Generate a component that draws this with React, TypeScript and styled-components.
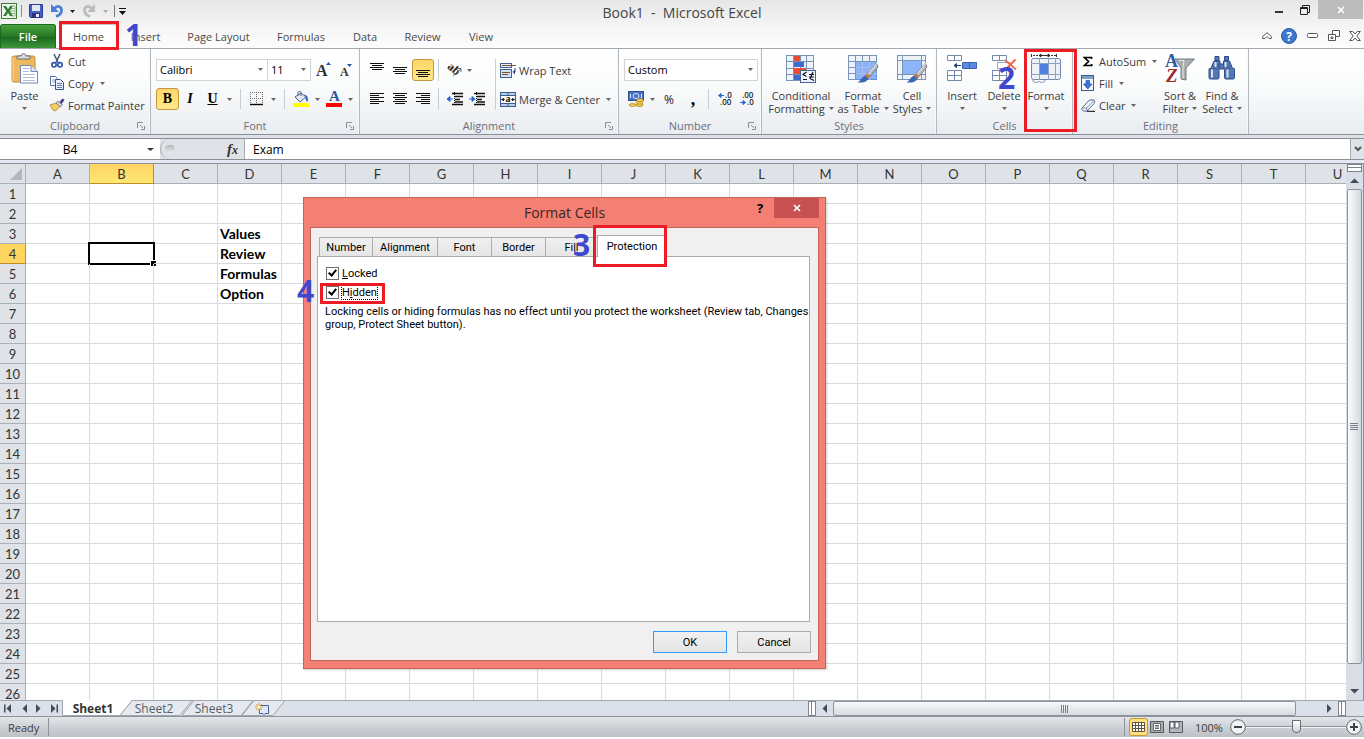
import React, { useEffect, useState } from "react";
import styled, { createGlobalStyle, css } from "styled-components";

const ui = `"Open Sans", "Noto Sans", sans-serif`;
const sheetFont = `Lato, "Open Sans", sans-serif`;
const dialogFont = `Roboto, "Liberation Sans", sans-serif`;

const Global = createGlobalStyle`
  *, *::before, *::after { box-sizing: border-box; }
  body { margin: 0; background: #fff; overflow: hidden; font-family: ${ui}; font-size: 11px; color: #3b3b3b; }
  button, input, select { font: inherit; color: inherit; margin: 0; }
  button { border: 0; padding: 0; background: none; cursor: default; }
  svg { display: block; flex: none; overflow: visible; }
  h1, h2, h3, p { margin: 0; font-weight: 400; }
`;

/* ---------- frame ---------- */

const Window = styled.div`
  position: relative;
  display: flex;
  flex-direction: column;
  height: 100vh;
  padding-bottom: 2px;
`;

const Top = styled.header`
  background: linear-gradient(#e6e6e6, #f4f4f4 50%, #fdfdfd);
`;

const TitleBar = styled.div`
  display: grid;
  grid-template-columns: 1fr auto 1fr;
  height: 24px;
`;

const QuickAccess = styled.div`
  display: flex;
  align-items: center;
  height: 22px;
  padding-left: 1px;
`;

const QuickButton = styled.button<{ $w: number }>`
  display: flex;
  justify-content: center;
  align-items: center;
  width: ${(p) => p.$w}px;
  height: 20px;
`;

const Rule = styled.span<{ $w: number; $h: number; $color?: string }>`
  display: flex;
  flex: none;
  justify-content: center;
  width: ${(p) => p.$w}px;
  height: ${(p) => p.$h}px;
  &::before {
    content: "";
    width: 1px;
    background: ${(p) => p.$color || "#c9ccd3"};
  }
`;

const AppTitle = styled.h1`
  font-size: 14px;
  line-height: 26px;
  color: #444;
  white-space: pre;
`;

const Caption = styled.div`
  display: flex;
  justify-content: flex-end;
  align-items: flex-start;
  padding-right: 1px;
`;

const CaptionButton = styled.button<{ $close?: boolean }>`
  display: flex;
  justify-content: center;
  align-items: center;
  width: ${(p) => (p.$close ? 45 : 26)}px;
  height: 19px;
  background: ${(p) => (p.$close ? "#bcbcbc" : "transparent")};
`;

const TabBar = styled.nav`
  display: flex;
  align-items: flex-end;
  height: 25px;
  border-bottom: 1px solid #a3aab2;
`;

const FileTab = styled.button`
  width: 56px;
  height: 24px;
  border: 1px solid #1f6a22;
  border-bottom: 0;
  border-radius: 3px 3px 0 0;
  background: linear-gradient(#48a03e, #2a7d28 45%, #1e6b20 55%, #3c963a);
  color: #fff;
  font-weight: 600;
`;

const RibbonTab = styled.button<{ $w: number; $active?: boolean }>`
  width: ${(p) => p.$w}px;
  height: 23px;
  color: #4a4a4a;
  ${(p) =>
    p.$active &&
    css`
      margin: 0 0 -1px 4px;
      height: 25px;
      padding-bottom: 2px;
      border: 1px solid #c0c4c9;
      border-bottom: 0;
      border-radius: 3px 3px 0 0;
      background: #fff;
    `}
`;

const TabTools = styled.div`
  display: flex;
  align-items: center;
  height: 25px;
  margin-left: auto;
`;

/* ---------- ribbon ---------- */

const Ribbon = styled.section`
  display: flex;
  height: 86px;
  border-bottom: 1px solid #8b9097;
  background: linear-gradient(#fff, #fbfcfc 40%, #e9ecf0);
`;

const Group = styled.section<{ $w: number }>`
  display: flex;
  flex: none;
  flex-direction: column;
  width: ${(p) => p.$w}px;
  border-right: 1px solid #b4b9c0;
  box-shadow: inset -1px 0 #f8f9fa;
`;

const GroupBody = styled.div<{ $pad: number }>`
  display: flex;
  flex: 1;
  padding: 1px 0 0 ${(p) => p.$pad}px;
`;

const GroupFoot = styled.div`
  display: grid;
  grid-template-columns: 18px 1fr 18px;
  align-items: center;
  height: 17px;
  text-align: center;
  color: #6b6f78;
`;

const LaunchButton = styled.button`
  display: flex;
  justify-content: center;
  align-items: center;
  height: 16px;
`;

const GroupName = styled.h2`
  font-size: 11px;
  line-height: 16px;
`;

const BigButton = styled.button<{ $w: number }>`
  display: flex;
  flex: none;
  flex-direction: column;
  align-items: center;
  width: ${(p) => p.$w}px;
  padding-top: 4px;
  line-height: 13px;
  white-space: nowrap;
`;

const BigIcon = styled.span`
  display: flex;
  justify-content: center;
  align-items: flex-start;
  height: 35px;
`;

const BigLine = styled.span`
  display: flex;
  align-items: center;
  gap: 4px;
  height: 13px;
`;

const Stack = styled.div<{ $w?: number }>`
  display: flex;
  flex: none;
  flex-direction: column;
  width: ${(p) => (p.$w ? p.$w + "px" : "auto")};
`;

const SmallButton = styled.button`
  display: flex;
  align-items: center;
  gap: 3px;
  height: 22px;
  white-space: nowrap;
`;

const IconSlot = styled.span`
  display: flex;
  justify-content: center;
  width: 16px;
`;

const Rows = styled.div<{ $w?: number }>`
  display: flex;
  flex: none;
  flex-direction: column;
  gap: 7px;
  width: ${(p) => (p.$w ? p.$w + "px" : "auto")};
  padding-top: 9px;
`;

const ToolRow = styled.div`
  display: flex;
  align-items: center;
  height: 22px;
`;

const Tool = styled.button<{ $w: number; $on?: boolean }>`
  display: flex;
  flex: none;
  justify-content: center;
  align-items: center;
  width: ${(p) => p.$w}px;
  height: 22px;
  font-size: 12px;
  color: #222;
  ${(p) =>
    p.$on &&
    css`
      border: 1px solid #c29a3d;
      border-radius: 3px;
      background: linear-gradient(#fcd56a, #ffe27a 60%, #ffe88c);
    `}
`;

const Glyph = styled.b<{ $look: "bold" | "italic" | "underline" | "comma" }>`
  font-family: "Liberation Serif", serif;
  font-size: ${(p) => (p.$look === "comma" ? 18 : 14)}px;
  line-height: 14px;
  color: #000;
  ${(p) => p.$look === "italic" && "font-style: italic;"}
  ${(p) => p.$look === "underline" && "text-decoration: underline;"}
`;

const Combo = styled.label<{ $w: number }>`
  position: relative;
  flex: none;
  width: ${(p) => p.$w}px;
  height: 22px;
  & + & { margin-left: -1px; }
  svg { position: absolute; right: 5px; top: 9px; pointer-events: none; }
`;

const ComboSelect = styled.select`
  display: block;
  width: 100%;
  height: 22px;
  padding: 0 3px 1px;
  appearance: none;
  border: 1px solid #d0d2d8;
  border-radius: 0;
  background: #fff;
  color: #000;
  line-height: 16px;
  outline: 0;
`;

/* ---------- formula bar ---------- */

const FormulaBar = styled.section`
  display: flex;
  height: 22px;
  margin-top: 3px;
  border-top: 1px solid #8b9097;
  border-bottom: 1px solid #8b9097;
  background: #dfe2e6;
  box-shadow: 0 -3px #dde0e6;
  font-size: 12px;
  color: #000;
`;

const NameBox = styled.div`
  display: flex;
  align-items: center;
  width: 160px;
  background: #fff;
`;

const NameInput = styled.input`
  flex: 1;
  min-width: 0;
  border: 0;
  outline: 0;
  background: none;
  text-align: center;
`;

const NameArrow = styled.button`
  width: 20px;
  height: 20px;
  display: flex;
  justify-content: center;
  align-items: center;
`;

const FunctionZone = styled.div`
  display: flex;
  justify-content: space-between;
  align-items: center;
  width: 85px;
  padding: 0 6px 0 4px;
  border: solid #a6abb2;
  border-width: 0 1px;
  border-radius: 11px 0 0 11px;
`;

const Knob = styled.span`
  width: 10px;
  height: 8px;
  border-radius: 4px;
  background: linear-gradient(#b4b8bd, #e8eaec);
`;

const Fx = styled.button`
  font: italic 700 15px/18px "Liberation Serif", serif;
  color: #333;
  sub { font-size: 12px; vertical-align: baseline; }
`;

const FormulaInput = styled.input`
  flex: 1;
  min-width: 0;
  padding: 0 8px;
  border: 0;
  outline: 0;
  background: #fff;
`;

const ExpandButton = styled.button`
  display: flex;
  justify-content: center;
  align-items: center;
  width: 14px;
  border-left: 1px solid #a6abb2;
`;

/* ---------- sheet ---------- */

const SheetArea = styled.main`
  display: flex;
  flex: 1 1 0;
  min-height: 0;
  margin-top: 3px;
  border-top: 1px solid #8b9097;
  box-shadow: 0 -3px #e6e8f3;
`;

const GridClip = styled.div`
  flex: 1 1 0;
  min-width: 0;
  overflow: hidden;
`;

const Grid = styled.table`
  width: max-content;
  table-layout: fixed;
  border-collapse: separate;
  border-spacing: 0;
  font-family: ${sheetFont};
  font-size: 14px;
  color: #000;
`;

const ColHead = styled.th<{ $on?: boolean; $corner?: boolean }>`
  width: ${(p) => (p.$corner ? 26 : 64)}px;
  min-width: ${(p) => (p.$corner ? 26 : 64)}px;
  height: 20px;
  padding: 0;
  border: solid #a9b0b8;
  border-width: 0 1px 1px 0;
  background: #dfe3e8;
  font-size: 13px;
  font-weight: 400;
  line-height: 18px;
  color: #333;
  ${(p) =>
    p.$on &&
    css`
      border-color: #c28a2a;
      background: linear-gradient(#fdd365, #ffe972);
    `}
  svg { margin: 0 3px 0 auto; }
`;

const RowHead = styled.th<{ $on?: boolean }>`
  height: 20px;
  padding: 0;
  border: solid #a9b0b8;
  border-width: 0 1px 1px 0;
  background: ${(p) => (p.$on ? "#fdd55f" : "#dfe3e8")};
  ${(p) => p.$on && "border-color: #c28a2a;"}
  font-size: 13px;
  font-weight: 400;
  line-height: 18px;
  color: #333;
`;

const Cell = styled.td`
  position: relative;
  height: 20px;
  padding: 0 0 0 2px;
  border: solid #d8dadc;
  border-width: 0 1px 1px 0;
  font-weight: 700;
  line-height: 18px;
  white-space: nowrap;
`;

const Selection = styled.span`
  position: absolute;
  inset: -2px;
  border: 2px solid #000;
  &::after {
    content: "";
    position: absolute;
    right: -3px;
    bottom: -3px;
    width: 6px;
    height: 6px;
    border: solid #fff;
    border-width: 1px 0 0 1px;
    background: #000;
  }
`;

const VScroll = styled.div`
  display: flex;
  flex-direction: column;
  align-items: center;
  width: 18px;
  padding-right: 1px;
  border-right: 1px solid #8b919b;
  background: #d9dde5;
`;

const VSplit = styled.span`
  width: 15px;
  height: 8px;
  border: 1px solid #7d828a;
  background: linear-gradient(#fff 2px, #7d828a 2px, #7d828a 3px, #fff 3px);
`;

const ScrollArrow = styled.button<{ $w: number; $h: number }>`
  display: flex;
  flex: none;
  justify-content: center;
  align-items: center;
  width: ${(p) => p.$w}px;
  height: ${(p) => p.$h}px;
`;

const VThumb = styled.div`
  display: flex;
  justify-content: center;
  align-items: center;
  width: 15px;
  height: calc(100% - 61px);
  border: 1px solid #8d939c;
  border-radius: 2px;
  background: linear-gradient(90deg, #fafbfc, #d3d8e0);
`;

const Spacer = styled.span`
  flex: 1;
`;

const SheetBar = styled.section`
  display: flex;
  height: 17px;
  border-top: 1px solid #a3a9b1;
  border-bottom: 1px solid #8d939b;
  background: #dce0e8;
`;

const SheetNav = styled.div`
  display: flex;
  width: 62px;
`;

const SheetTabs = styled.div`
  position: relative;
  display: flex;
  width: 746px;
`;

const TabShapes = styled.svg`
  position: absolute;
  left: 0;
  top: -1px;
`;

const SheetTab = styled.button<{ $w: number; $active?: boolean }>`
  position: relative;
  width: ${(p) => p.$w}px;
  height: 15px;
  font-size: 12px;
  line-height: 15px;
  text-align: center;
  font-weight: ${(p) => (p.$active ? 700 : 400)};
  color: ${(p) => (p.$active ? "#333" : "#555c66")};
  svg { margin: auto; }
`;

const HScroll = styled.div`
  display: flex;
  flex: 1;
  min-width: 0;
  padding-right: 18px;
`;

const HSplit = styled.span`
  flex: none;
  width: 8px;
  height: 15px;
  border: 1px solid #7d828a;
  background: linear-gradient(90deg, #fff 2px, #7d828a 2px, #7d828a 3px, #fff 3px);
`;

const HThumb = styled.div`
  display: flex;
  flex: 1;
  justify-content: center;
  align-items: center;
  height: 15px;
  border: 1px solid #8d939c;
  border-radius: 2px;
  background: linear-gradient(#f8fafc, #d5dae1);
`;

const StatusBar = styled.footer`
  display: flex;
  align-items: center;
  height: 20px;
  padding-left: 8px;
  background: linear-gradient(#e3e6e9, #cdd1d5 50%, #bdc1c6);
`;

const StatusText = styled.span<{ $w: number }>`
  width: ${(p) => p.$w}px;
`;

const ViewButton = styled.button<{ $w: number; $on?: boolean }>`
  display: flex;
  justify-content: center;
  align-items: center;
  width: ${(p) => p.$w}px;
  height: 18px;
  ${(p) =>
    p.$on &&
    css`
      border: 1px solid #c29a3d;
      border-radius: 3px;
      background: #ffe07a;
    `}
`;

const Zoom = styled.input`
  width: 100px;
  height: 18px;
  appearance: none;
  background: none;
  outline: 0;
  &::-webkit-slider-runnable-track {
    height: 12px;
    background: linear-gradient(transparent 5px, #8b95a1 5px, #8b95a1 6px, #f0f2f4 6px, #f0f2f4 7px, transparent 7px);
  }
  &::-webkit-slider-thumb {
    appearance: none;
    width: 9px;
    height: 13px;
    margin-top: -1px;
    background: linear-gradient(#fff, #cfd3d8);
    border: 1px solid #666c74;
    border-radius: 1px 1px 5px 5px;
  }
`;

/* ---------- dialog ---------- */

const Dialog = styled.div`
  position: absolute;
  left: 303px;
  top: 197px;
  display: flex;
  flex-direction: column;
  width: 523px;
  height: 472px;
  padding: 0 6px 7px;
  border: 1px solid #c2645b;
  background: #f48074;
  box-shadow: 1px 1px 2px rgba(0, 0, 0, 0.2);
  color: #000;
`;

const DialogTitle = styled.div`
  display: grid;
  grid-template-columns: 1fr auto 1fr;
  height: 29px;
`;

const DialogName = styled.h2`
  font-size: 14px;
  line-height: 30px;
  color: #3d2523;
`;

const DialogCaption = styled.div`
  display: flex;
  justify-content: flex-end;
`;

const HelpButton = styled.button`
  width: 28px;
  height: 20px;
  font-size: 13px;
  font-weight: 700;
`;

const CloseButton = styled.button`
  display: flex;
  justify-content: center;
  align-items: center;
  width: 45px;
  height: 20px;
  background: #c75050;
`;

const DialogBody = styled.div`
  display: flex;
  flex: 1;
  flex-direction: column;
  padding: 7px 7px 7px 6px;
  border: 1px solid #c2645b;
  background: #f0f0f0;
  font-family: ${dialogFont};
`;

const DialogTabs = styled.div`
  display: flex;
  align-items: flex-end;
  height: 21px;
  padding-left: 2px;
`;

const DialogTab = styled.button<{ $w: number; $active?: boolean }>`
  width: ${(p) => p.$w}px;
  height: 19px;
  border: 1px solid #acacac;
  border-width: 1px 0 0 1px;
  background: linear-gradient(#f0f0f0, #e5e5e5);
  ${(p) =>
    p.$active &&
    css`
      position: relative;
      height: 22px;
      margin-bottom: -1px;
      border-width: 1px 1px 0 1px;
      background: #fff;
    `}
`;

const Pane = styled.div`
  flex: 1;
  margin-right: 1px;
  padding: 7px 0 7px 7px;
  border: 1px solid #acacac;
  background: #fff;
`;

const Check = styled.label`
  display: flex;
  align-items: center;
  gap: 3px;
  width: max-content;
  height: 19px;
  margin-left: 1px;
  u { text-underline-offset: 1px; }
`;

const CheckBox = styled.input`
  width: 13px;
  height: 13px;
  appearance: none;
  border: 1px solid #707070;
  background: #fff;
  &:checked::before {
    content: "";
    display: block;
    width: 5px;
    height: 8px;
    margin: 0 0 0 3px;
    border: solid #000;
    border-width: 0 2px 2px 0;
    transform: rotate(40deg);
  }
`;

const CheckText = styled.span<{ $focus?: boolean }>`
  line-height: 13px;
  ${(p) => p.$focus && "outline: 1px dotted #000;"}
`;

const Note = styled.p`
  margin-top: 3px;
  line-height: 13px;
`;

const DialogActions = styled.div`
  display: flex;
  justify-content: flex-end;
  gap: 10px;
  padding-top: 9px;
`;

const PushButton = styled.button<{ $primary?: boolean }>`
  width: 74px;
  height: 22px;
  border: 1px solid ${(p) => (p.$primary ? "#3399ff" : "#acacac")};
  background: linear-gradient(#f0f0f0, #e5e5e5);
`;

/* ---------- tutorial marks ---------- */

const MarkBox = styled.span<{ $x: number; $y: number; $w: number; $h: number }>`
  position: absolute;
  left: ${(p) => p.$x}px;
  top: ${(p) => p.$y}px;
  width: ${(p) => p.$w}px;
  height: ${(p) => p.$h}px;
  border: 3px solid #ed1c24;
  pointer-events: none;
`;

const MarkNumber = styled.span<{ $x: number; $y: number }>`
  position: absolute;
  left: ${(p) => p.$x}px;
  top: ${(p) => p.$y}px;
  font-size: 30px;
  font-weight: 700;
  line-height: 30px;
  color: #3f48cc;
  pointer-events: none;
`;

/* ---------- icons ---------- */

const Down = ({ color = "#666", s = 5 }: { color?: string; s?: number }) => (
  <svg width={s} height={3} viewBox="0 0 6 3" preserveAspectRatio="none"><path d="M0 0h6L3 3z" fill={color} /></svg>
);

const Launcher = () => (
  <svg width="8" height="8" viewBox="0 0 8 8"><path d="M.5 6V.5H6M3 3l3 3M7.500 4v3.500H4" fill="none" stroke="#8a8f98" /></svg>
);

const ExcelLogo = () => (
  <svg width="16" height="16" viewBox="0 0 16 16">
    <rect x=".5" y=".5" width="15" height="15" fill="#eef6ec" stroke="#3c7a38" />
    <path d="M10 3h4v10h-4zM10 5.500h4M10 8h4M10 10.500h4" fill="#fff" stroke="#8cb887" />
    <path d="M2 3h3l2 3.200L9 3h3L8.600 8 12 13H9L7 9.800 5 13H2l3.400-5z" fill="#2c7d31" />
  </svg>
);

const SaveIcon = () => (
  <svg width="14" height="14" viewBox="0 0 14 14">
    <path d="M.5.5h13v13h-12l-1-1z" fill="#4a5fc4" stroke="#2e3c92" />
    <path d="M3 1h8v6H3z" fill="#dfe7f8" /><path d="M3 9h8v5H3z" fill="#27357f" /><path d="M7 10h3v3H7z" fill="#e9edf8" />
  </svg>
);

const UndoIcon = ({ color = "#4a7fd6", flip = false }: { color?: string; flip?: boolean }) => (
  <svg width="14" height="14" viewBox="0 0 14 14">
    <g transform={flip ? "translate(14 0) scale(-1 1)" : undefined}>
      <path d="M4.500 4.500C7 1 11.500 2 11.500 6.500 11.500 10 9 11.500 6 12.500" fill="none" stroke={color} strokeWidth="2.800" />
      <path d="M1 0v8h8z" fill={color} />
    </g>
  </svg>
);

const CustomizeIcon = () => (
  <svg width="8" height="8" viewBox="0 0 8 8"><path d="M0 1.500h7" stroke="#111" /><path d="M0 4h7L3.500 8z" fill="#111" /></svg>
);

const PasteIcon = () => (
  <svg width="28" height="32" viewBox="0 0 28 32">
    <rect x="1" y="2" width="23" height="26" rx="2" fill="#edb95c" stroke="#c58b36" />
    <path d="M2 4v23" stroke="#f8d999" />
    <path d="M6 5V2h4c0-3 5-3 5 0h4v3z" fill="#d8dadd" stroke="#696e76" />
    <path d="M9.500 11.500H20l6.500 6v11.500h-17z" fill="#fff" stroke="#7489aa" />
    <path d="M20 11.500v6h6.500" fill="#dfe8f6" stroke="#7489aa" />
    <path d="M12 14.500h6M12 17.500h6M12 20.500h12M12 23.500h12M12 26.500h12" stroke="#a9bdde" />
  </svg>
);

const CutIcon = () => (
  <svg width="14" height="14" viewBox="0 0 14 14">
    <path d="M4 0l4 8.500M10 0L6 8.500" stroke="#4a5a78" strokeWidth="1.600" />
    <circle cx="4" cy="10.800" r="2.200" fill="none" stroke="#2c55a8" strokeWidth="1.600" />
    <circle cx="10" cy="10.800" r="2.200" fill="none" stroke="#2c55a8" strokeWidth="1.600" />
  </svg>
);

const CopyIcon = () => (
  <svg width="16" height="14" viewBox="0 0 16 14">
    <path d="M1.500.5h5l2 2v7h-7z" fill="#fff" stroke="#5470a5" /><path d="M3 4h4M3 6h4" stroke="#86a0cf" />
    <path d="M6.500 3.500h5l3 3v7h-8z" fill="#eaf1fc" stroke="#345291" /><path d="M8 7.500h5M8 9.500h5M8 11.500h5" stroke="#5f80bd" />
  </svg>
);

const PainterIcon = () => (
  <svg width="16" height="14" viewBox="0 0 16 14">
    <path d="M1 7l6-2 4 3.500L6.500 13 4 12z" fill="#f3cf62" stroke="#a98432" strokeWidth=".8" />
    <path d="M7 5l2-2 4.500 4-2.500 2z" fill="#ccd0d8" stroke="#6f7480" strokeWidth=".8" />
    <path d="M10.500 4l3-3.500 2 1.500-3 4z" fill="#4a3a8c" />
  </svg>
);

const GrowFont = ({ down = false }: { down?: boolean }) => (
  <svg width="16" height="16" viewBox="0 0 16 16">
    <text x={down ? 2 : 0} y="14" fontFamily="Liberation Serif, serif" fontWeight="700" fontSize={down ? 12 : 16} fill="#333">A</text>
    <path d={down ? "M9 2h5l-2.500 3z" : "M10 3h5l-2.500-3z"} fill="#2c55a8" />
  </svg>
);

const BordersIcon = () => (
  <svg width="14" height="14" viewBox="0 0 14 14">
    <path d="M.5 0v12M6.500 0v12M12.500 0v12M0 .5h13M0 6.500h13" stroke="#666" strokeDasharray="1 1" />
    <path d="M0 12.500h13" stroke="#000" strokeWidth="1.400" />
  </svg>
);

const BucketIcon = () => (
  <svg width="16" height="16" viewBox="0 0 16 16">
    <path d="M2 6l6-4 5 4-6 5z" fill="#e2e9f3" stroke="#4c5f80" /><path d="M5 5V1.500c0-1.500 3-1.500 3 0V5" fill="none" stroke="#4c5f80" />
    <path d="M11 3.500c3 .5 5 3 3.500 7.500-2-1-2-3-2-5" fill="#3569c4" />
    <path d="M0 12h16v4H0z" fill="#ff0" />
  </svg>
);

const FontColorIcon = () => (
  <svg width="16" height="16" viewBox="0 0 16 16">
    <text x="3" y="10" fontFamily="Liberation Serif, serif" fontWeight="700" fontSize="15" fill="#2f55a0">A</text>
    <path d="M0 12h16v4H0z" fill="#f00" />
  </svg>
);

const lineSets: Record<string, [number, number][]> = {
  full: [[0, 14], [2, 10], [0, 14], [2, 10]],
  left: [[0, 14], [0, 9], [0, 14], [0, 9], [0, 14], [0, 9]],
  center: [[0, 14], [2, 10], [0, 14], [2, 10], [0, 14], [2, 10]],
  right: [[0, 14], [5, 9], [0, 14], [5, 9], [0, 14], [5, 9]],
};

const Lines = ({ kind, shift = 0 }: { kind: string; shift?: number }) => (
  <svg width="15" height="14" viewBox="0 0 15 14">
    {lineSets[kind].map(([x, w], i) => (
      <rect key={i} x={x} y={shift + i * 2} width={w} height="1" fill="#111" />
    ))}
  </svg>
);

const OrientIcon = () => (
  <svg width="15" height="14" viewBox="0 0 15 14">
    <text x="0" y="6" transform="rotate(42 2 5)" fontFamily="Liberation Serif, serif" fontWeight="700" fontSize="12" fill="#222">ab</text>
    <path d="M6 13l8-7M14 9V5.500h-3.500" fill="none" stroke="#666" />
  </svg>
);

const IndentIcon = ({ inward = false }: { inward?: boolean }) => (
  <svg width="16" height="14" viewBox="0 0 16 14">
    <path d="M5 1.500h11M8 4.500h8M8 7.500h5M8 10h8M5 12.500h11" stroke="#111" strokeWidth="1.500" />
    <path d="M7.500 0v14" stroke="#111" strokeDasharray="1 1" />
    <path d={inward ? "M0 7h3M3 4.500L6 7 3 9.500z" : "M6 7H3M3 4.500L0 7l3 2.500z"} fill="#2f66cf" stroke="#2f66cf" />
  </svg>
);

const WrapIcon = () => (
  <svg width="16" height="16" viewBox="0 0 16 16">
    <rect x=".5" y="1.500" width="11" height="4" fill="#e7eefa" stroke="#46618f" />
    <path d="M2 3.500h14" stroke="#7b5330" />
    <rect x=".5" y="7.500" width="11" height="8" fill="#cfe0f7" stroke="#46618f" />
    <path d="M2 10.500h8M2 12.500h6" stroke="#7b5330" />
    <path d="M15 6v4h-1.500" fill="none" stroke="#2c4f94" /><path d="M15 7.500v5L12.500 10z" fill="#2c4f94" />
  </svg>
);

const MergeIcon = () => (
  <svg width="16" height="16" viewBox="0 0 16 16">
    <rect x=".5" y="1.500" width="15" height="14" fill="#b9cdea" stroke="#3b5b92" />
    <path d="M.5 4.500h15M.5 12.500h15M8 1v4M8 12v4" stroke="#3b5b92" />
    <path d="M1 5h14v7H1z" fill="#fff" />
    <path d="M1 8.500h4M3.500 7v3L2 8.500zM15 8.500h-4M12.500 7v3L14 8.500z" fill="#222" stroke="#222" strokeWidth=".8" />
    <text x="5.500" y="11" fontFamily="Liberation Serif, serif" fontWeight="700" fontSize="10" fill="#111">a</text>
  </svg>
);

const CurrencyIcon = () => (
  <svg width="16" height="16" viewBox="0 0 16 16">
    <rect x=".5" y=".5" width="15" height="9" fill="#4772c8" stroke="#2c4f94" />
    <ellipse cx="8" cy="5" rx="3" ry="2.500" fill="none" stroke="#d5e2f8" /><path d="M2.500 3v4M13.500 3v4" stroke="#d5e2f8" />
    <g fill="#f5cf5a" stroke="#a27a1c" strokeWidth=".7">
      <ellipse cx="11.500" cy="14" rx="3.500" ry="1.600" /><ellipse cx="11.500" cy="11.600" rx="3.500" ry="1.600" /><ellipse cx="12" cy="9.200" rx="3.300" ry="1.600" /><ellipse cx="4.500" cy="14" rx="3.300" ry="1.400" />
    </g>
  </svg>
);

const DecimalIcon = ({ dec = false }: { dec?: boolean }) => (
  <svg width="16" height="16" viewBox="0 0 16 16">
    <g fontFamily="Open Sans, sans-serif" fontWeight="600" fontSize="8" fill="#222">
      <text x={dec ? 3 : 8} y="7">{dec ? ".00" : ".0"}</text>
      <text x={dec ? 8 : 3} y="14">{dec ? ".0" : ".00"}</text>
    </g>
    <path d={dec ? "M1 11.500h3M4 9.500L6.500 11.500 4 13.500z" : "M7 4.500H4M4 2.500L1.500 4.500 4 6.500z"} fill="#2f66cf" stroke="#2f66cf" />
  </svg>
);

const Table = ({ w = 27, h = 24, cols = 4, rows = 4 }: { w?: number; h?: number; cols?: number; rows?: number }) => (
  <g>
    <rect x=".5" y="1.500" width={w} height={h} fill="#eef3fb" />
    <g stroke="#7c93b8">
      {Array.from({ length: cols + 1 }, (_, i) => <path key={"c" + i} d={`M${Math.round((w * i) / cols) + 0.5} 1v${h + 1}`} />)}
      {Array.from({ length: rows + 1 }, (_, i) => <path key={"r" + i} d={`M0 ${Math.round((h * i) / rows) + 1.5}h${w + 1}`} />)}
    </g>
  </g>
);

const Brush = () => (
  <g>
    <path d="M28.500 9L19 20l3 2.500 8-9.500z" fill="#b9bec6" stroke="#5f646c" strokeWidth=".8" />
    <path d="M29 9l-9 11" stroke="#f4f4f4" />
    <path d="M19 19.500l3.500 3-2 2.500-4-3z" fill="#c98040" />
    <path d="M17 21.500l3.500 3C18 29 14 28.500 9.500 28.500c3-1.500 4-5.500 7.500-7z" fill="#3f68b4" />
  </g>
);

const ConditionalIcon = () => (
  <svg width="30" height="30" viewBox="0 0 30 30">
    <Table w={27} h={25} />
    <path d="M8 2h6v5H8zM8 14h12v6H8z" fill="#ee4a32" /><path d="M8 8h10v5H8zM8 21h6v5H8z" fill="#3d6bd0" />
    <rect x="14.500" y="16.500" width="15" height="12" fill="#eef4ff" stroke="#4a6390" />
    <path d="M20.500 18l-3.500 2.500 3.500 2M17 25.500h4M23 20.500h5M23 23h5M27 18l-3 7M24 24.500l4 2" stroke="#111" fill="none" strokeWidth="1.200" />
  </svg>
);

const FormatTableIcon = () => (
  <svg width="31" height="30" viewBox="0 0 31 30">
    <Table w={28} /><path d="M8 8h21v18H8z" fill="#5b8df0" fillOpacity=".65" /><path d="M14.500 8v18M21.500 8v18M8 13.500h21M8 19.500h21" stroke="#a5c0f2" /><Brush />
  </svg>
);

const CellStylesIcon = () => (
  <svg width="31" height="30" viewBox="0 0 31 30">
    <rect x=".5" y="1.500" width="28" height="24" fill="#eef3fb" stroke="#7c93b8" /><path d="M5.500 1v25M24.500 1v25M0 6.500h29M0 20.500h29" stroke="#7c93b8" />
    <path d="M6 7h18v13H6z" fill="#8eb5fa" /><Brush />
  </svg>
);

const CellStubs = () => (
  <g fill="#fff" stroke="#7389ad"><path d="M1.500 1.500h14v5h-14zM8.500 1.500v5M1.500 16.500h14v10h-14zM8.500 16.500v10M1.500 21.500h14" /></g>
);

const InsertIcon = () => (
  <svg width="32" height="30" viewBox="0 0 32 30">
    <CellStubs />
    <path d="M16.500 8.500h14v6h-14z" fill="#5b8be0" stroke="#3a62ad" /><path d="M23.500 8.500v6" stroke="#3a62ad" />
    <path d="M15 11.500H9M10.500 9.500l-2.500 2 2.500 2z" fill="#1f3c70" stroke="#1f3c70" />
  </svg>
);

const DeleteIcon = () => (
  <svg width="26" height="30" viewBox="0 0 26 30">
    <CellStubs />
    <path d="M6.500 8.500h12v6h-12z" fill="none" stroke="#2c4f94" strokeDasharray="1 1" />
    <path d="M14 6l11 9.500M24.500 5.500L14 16" stroke="#f06548" strokeWidth="1.800" />
  </svg>
);

const FormatIcon = () => (
  <svg width="32" height="30" viewBox="0 0 32 30">
    <path d="M1.500 0v3M26.500 0v3" stroke="#333" /><path d="M3 1.500h23" stroke="#333" strokeDasharray="2 1" /><path d="M9 1.500h11M11 0v3L9 1.500zM18 0v3l2-1.500z" stroke="#222" fill="#222" strokeWidth=".8" />
    <rect x="1.500" y="4.500" width="29" height="21" rx="2" fill="#eef2f8" stroke="#6f87ad" />
    <path d="M9.500 4v22M18.500 4v22M25.500 4v22M1 9.500h30M1 20.500h30" stroke="#8ea2c2" />
    <path d="M10 10h8v10h-8z" fill="#4f82e0" />
    <path d="M3 26c0 3 5 3 6 1 1 2 6 2 6-1" fill="#fff" stroke="#6f87ad" />
  </svg>
);

const SumIcon = () => (
  <svg width="10" height="11" viewBox="0 0 10 11"><path d="M8.500 3V1.500h-7L5.500 5.500l-4 4h7.200V8" fill="none" stroke="#000" strokeWidth="1.700" /></svg>
);

const FillIcon = () => (
  <svg width="14" height="16" viewBox="0 0 14 16">
    <rect x=".5" y=".5" width="12" height="15" fill="#f4f7fd" stroke="#3b5b92" /><path d="M1 1h11v3H1z" fill="#7f9ccc" />
    <path d="M5 5.500h3.500V9h2.500l-4.200 5L2.500 9H5z" fill="#3d74da" stroke="#1f4a9c" strokeWidth=".7" />
  </svg>
);

const EraserIcon = () => (
  <svg width="15" height="13" viewBox="0 0 15 13">
    <path d="M1 9l7.500-8h4.500c1 1 .8 2.500 0 3.500L6 12H2.500C1 11.500.5 10.500 1 9z" fill="#f4f6fb" stroke="#50668f" /><path d="M1 9h4.500L13 1.500M5.500 9L6 12" fill="none" stroke="#7a8db3" /><path d="M6 12.300h8" stroke="#000" />
  </svg>
);

const SortIcon = () => (
  <svg width="30" height="30" viewBox="0 0 30 30">
    <text x="0" y="13" fontFamily="Liberation Serif, serif" fontWeight="700" fontSize="18" fill="#2f5aa8">A</text>
    <path d="M10 5h19.500L21 14v12l-5-1V14z" fill="#a9adb2" stroke="#777c82" /><path d="M14 6.500h5l-1 7v11" fill="none" stroke="#e6e8ea" />
    <text x="1" y="28" fontFamily="Liberation Serif, serif" fontWeight="700" fontStyle="italic" fontSize="19" fill="#9e2a2a">Z</text>
  </svg>
);

const FindIcon = () => (
  <svg width="28" height="28" viewBox="0 0 28 28">
    <g fill="#5277b4" stroke="#294a86">
      <path d="M3.500 13L6 7h6v6zM15.500 13V7h6l2.500 6z" /><path d="M7 2.500h4v4H7zM16.500 2.500h4v4h-4z" />
      <rect x="1" y="14" width="10" height="11" rx="1.500" /><rect x="16.500" y="14" width="10" height="11" rx="1.500" /><path d="M11 10h5v5h-5z" />
    </g>
    <path d="M4 15.500v8M19.500 15.500v8M7.500 8v5M17.500 8v5" stroke="#d6e2f6" strokeWidth="2" />
  </svg>
);

const MinIcon = () => <svg width="8" height="9" viewBox="0 0 8 9"><path d="M0 7h8" stroke="#333" strokeWidth="2" /></svg>;
const RestoreIcon = () => <svg width="10" height="10" viewBox="0 0 10 10"><path d="M.5 2.500h7v7h-7zM2.500 2V.5h7v7H8M.5 3.500h7" fill="none" stroke="#222" /></svg>;
const CrossIcon = ({ color = "#fff" }: { color?: string }) => (
  <svg width="8" height="8" viewBox="0 0 8 8"><path d="M1 1l6 6M7 1L1 7" stroke={color} strokeWidth="1.600" /></svg>
);

const CollapseIcon = () => <svg width="10" height="8" viewBox="0 0 10 8"><path d="M.7 4.500L5 .7l4.300 3.800v2H7L5 4.500 3 6.500H.7z" fill="#fff" stroke="#555" /></svg>;
const HelpIcon = () => (
  <svg width="16" height="16" viewBox="0 0 16 16">
    <circle cx="8" cy="8" r="7.500" fill="#3d77cc" stroke="#2c5ba6" />
    <text x="8" y="12.500" textAnchor="middle" fontFamily="Open Sans, sans-serif" fontWeight="700" fontSize="12" fill="#fff">?</text>
  </svg>
);
const BookMin = () => <svg width="11" height="5" viewBox="0 0 11 5"><rect x=".5" y=".5" width="10" height="4" rx="1" fill="#fff" stroke="#555" /></svg>;
const BookRestore = () => <svg width="12" height="11" viewBox="0 0 12 11"><path d="M4.500.5h7v6h-7z" fill="#fff" stroke="#555" /><path d="M.5 4.500h7v6h-7zM3 7h2v1.500H3z" fill="#fff" stroke="#555" /></svg>;
const BookClose = () => (
  <svg width="12" height="10" viewBox="0 0 12 10"><path d="M.7.5h3L6 3 8.300.5h3L7.800 5l3.500 4.500h-3L6 7 3.700 9.500h-3L4.200 5z" fill="#fff" stroke="#555" /></svg>
);

const Chevron = () => <svg width="8" height="6" viewBox="0 0 8 6"><path d="M1 1l3 3 3-3" fill="none" stroke="#555" strokeWidth="2" /></svg>;

const Arrow = ({ dir, bar = false }: { dir: "left" | "right" | "up" | "down"; bar?: boolean }) => {
  const turn = { left: 0, up: 90, right: 180, down: 270 }[dir];
  return (
    <svg width="9" height="9" viewBox="0 0 9 9">
      <g transform={`rotate(${turn} 4.500 4.500)`} fill="#444c58">
        <path d="M7 0v9L2.500 4.500z" />{bar && <path d="M0 .5h1.500v8H0z" />}
      </g>
    </svg>
  );
};

const Grip = ({ vertical = false }: { vertical?: boolean }) => (
  <svg width="8" height="8" viewBox="0 0 8 8"><path d={vertical ? "M.5 0v8M2.500 0v8M4.500 0v8M6.500 0v8" : "M0 .5h8M0 2.500h8M0 4.500h8M0 6.500h8"} stroke="#7a808a" /></svg>
);

const NewSheetIcon = () => (
  <svg width="15" height="12" viewBox="0 0 15 12">
    <path d="M4.500 2.500h9v8H10l-1 1-1-1H4.500z" fill="#dce8fb" stroke="#46618f" /><path d="M4 0v8M0 4h8M1 1l6 6M7 1L1 7" stroke="#e89a2c" /><circle cx="4" cy="4" r="1.500" fill="#fff" />
  </svg>
);

const NormalView = () => <svg width="13" height="10" viewBox="0 0 13 10"><path d="M.5.5h12v9H.5zM.5 3.500h12M.5 6.500h12M3.500.5v9M6.500.5v9M9.500.5v9" fill="#fff" stroke="#5c5540" /></svg>;
const PageView = () => <svg width="14" height="12" viewBox="0 0 14 12"><path d="M.5.5h13v11H.5z" fill="#a6abb2" stroke="#555b63" /><path d="M3.500 2.500h7v7h-7zM5 4.500h4M5 6h4M5 7.500h4" fill="#fff" stroke="#666" /></svg>;
const BreakView = () => <svg width="14" height="12" viewBox="0 0 14 12"><path d="M.5.5h13v11H.5z" fill="#b4b8be" stroke="#555b63" /><path d="M1 1h4v6H1zM6 1h4v6H6z" fill="#fff" stroke="#555b63" /></svg>;

const ZoomCircle = ({ plus = false }: { plus?: boolean }) => (
  <svg width="16" height="16" viewBox="0 0 16 16">
    <circle cx="8" cy="8" r="7.300" fill="#f2f3f5" stroke="#646a72" /><path d={plus ? "M4 8h8M8 4v8" : "M4 8h8"} stroke="#444" strokeWidth="2" />
  </svg>
);

/* ---------- pieces ---------- */

const ribbonTabs: [string, number][] = [
  ["Insert", 57], ["Page Layout", 89], ["Formulas", 76], ["Data", 52], ["Review", 63], ["View", 54],
];

const GroupFooter = ({ name, launcher }: { name: string; launcher?: boolean }) => (
  <GroupFoot>
    <span />
    <GroupName>{name}</GroupName>
    {launcher ? <LaunchButton aria-label={name + " options"}><Launcher /></LaunchButton> : <span />}
  </GroupFoot>
);

const Big = ({ w, icon, top, bottom, menu = true }: { w: number; icon: React.ReactNode; top: string; bottom?: string; menu?: boolean }) => (
  <BigButton $w={w}>
    <BigIcon>{icon}</BigIcon>
    <BigLine>{top}</BigLine>
    <BigLine>{bottom}{menu && <Down />}</BigLine>
  </BigButton>
);

const Small = ({ icon, text, menu }: { icon: React.ReactNode; text: string; menu?: boolean }) => (
  <SmallButton><IconSlot>{icon}</IconSlot>{text}{menu && <>&nbsp;<Down /></>}</SmallButton>
);

const columnName = (i: number) => (i < 26 ? "" : String.fromCharCode(64 + Math.floor(i / 26))) + String.fromCharCode(65 + (i % 26));

const cells: Record<string, string> = { D3: "Values", D4: "Review", D5: "Formulas", D6: "Option" };

const useGridSize = () => {
  const measure = () => ({
    cols: Math.ceil((window.innerWidth - 44) / 64),
    rows: Math.ceil((window.innerHeight - 223) / 20),
  });
  const [size, setSize] = useState(measure);
  useEffect(() => {
    const update = () => setSize(measure());
    window.addEventListener("resize", update);
    return () => window.removeEventListener("resize", update);
  }, []);
  return size;
};

const Sheet = () => {
  const { cols, rows } = useGridSize();
  const names = Array.from({ length: cols }, (_, i) => columnName(i));
  return (
    <Grid>
      <thead>
        <tr>
          <ColHead $corner aria-label="Select all">
            <svg width="12" height="12" viewBox="0 0 12 12"><path d="M12 0v12H0z" fill="#b3b8be" /></svg>
          </ColHead>
          {names.map((n) => <ColHead key={n} $on={n === "B"}>{n}</ColHead>)}
        </tr>
      </thead>
      <tbody>
        {Array.from({ length: rows }, (_, r) => r + 1).map((r) => (
          <tr key={r}>
            <RowHead $on={r === 4}>{r}</RowHead>
            {names.map((n) => <Cell key={n}>{cells[n + r]}{n + r === "B4" && <Selection />}</Cell>)}
          </tr>
        ))}
      </tbody>
    </Grid>
  );
};

const FormatCells = () => (
  <Dialog role="dialog" aria-label="Format Cells">
    <DialogTitle>
      <span />
      <DialogName>Format Cells</DialogName>
      <DialogCaption>
        <HelpButton>?</HelpButton>
        <CloseButton aria-label="Close"><CrossIcon /></CloseButton>
      </DialogCaption>
    </DialogTitle>
    <DialogBody>
      <DialogTabs>
        <DialogTab $w={53}>Number</DialogTab>
        <DialogTab $w={65}>Alignment</DialogTab>
        <DialogTab $w={54}>Font</DialogTab>
        <DialogTab $w={54}>Border</DialogTab>
        <DialogTab $w={52}>Fill</DialogTab>
        <DialogTab $w={70} $active>Protection</DialogTab>
      </DialogTabs>
      <Pane>
        <Check><CheckBox type="checkbox" defaultChecked /><CheckText><u>L</u>ocked</CheckText></Check>
        <Check><CheckBox type="checkbox" defaultChecked /><CheckText $focus>H<u>i</u>dden</CheckText></Check>
        <Note>Locking cells or hiding formulas has no effect until you protect the worksheet (Review tab, Changes group, Protect Sheet button).</Note>
      </Pane>
      <DialogActions>
        <PushButton $primary>OK</PushButton>
        <PushButton>Cancel</PushButton>
      </DialogActions>
    </DialogBody>
  </Dialog>
);

export default function App() {
  return (
    <Window>
      <Global />
      <Top>
        <TitleBar>
          <QuickAccess>
            <ExcelLogo />
            <Rule $w={9} $h={12} $color="#8c8c8c" />
            <QuickButton $w={20} aria-label="Save"><SaveIcon /></QuickButton>
            <QuickButton $w={22} aria-label="Undo"><UndoIcon /></QuickButton>
            <QuickButton $w={8} aria-label="Undo list"><Down color="#222" /></QuickButton>
            <QuickButton $w={26} aria-label="Redo"><UndoIcon flip color="#b9bbbe" /></QuickButton>
            <QuickButton $w={6} aria-label="Redo list"><Down color="#aaa" /></QuickButton>
            <Rule $w={12} $h={12} $color="#777" />
            <QuickButton $w={6} aria-label="Customize toolbar"><CustomizeIcon /></QuickButton>
          </QuickAccess>
          <AppTitle>Book1  -  Microsoft Excel</AppTitle>
          <Caption>
            <CaptionButton aria-label="Minimize"><MinIcon /></CaptionButton>
            <CaptionButton aria-label="Restore"><RestoreIcon /></CaptionButton>
            <CaptionButton $close aria-label="Close"><CrossIcon /></CaptionButton>
          </Caption>
        </TitleBar>
        <TabBar>
          <FileTab>File</FileTab>
          <RibbonTab $w={57} $active>Home</RibbonTab>
          {ribbonTabs.map(([name, w]) => <RibbonTab key={name} $w={w}>{name}</RibbonTab>)}
          <TabTools>
            <QuickButton $w={20} aria-label="Collapse ribbon"><CollapseIcon /></QuickButton>
            <QuickButton $w={24} aria-label="Help"><HelpIcon /></QuickButton>
            <QuickButton $w={22} aria-label="Minimize workbook"><BookMin /></QuickButton>
            <QuickButton $w={22} aria-label="Restore workbook"><BookRestore /></QuickButton>
            <QuickButton $w={19} aria-label="Close workbook"><BookClose /></QuickButton>
          </TabTools>
        </TabBar>
      </Top>

      <Ribbon>
        <Group $w={151}>
          <GroupBody $pad={0}>
            <Big w={49} icon={<PasteIcon />} top="Paste" />
            <Stack>
              <Small icon={<CutIcon />} text="Cut" />
              <Small icon={<CopyIcon />} text="Copy" menu />
              <Small icon={<PainterIcon />} text="Format Painter" />
            </Stack>
          </GroupBody>
          <GroupFooter name="Clipboard" launcher />
        </Group>

        <Group $w={209}>
          <GroupBody $pad={5}>
            <Rows>
              <ToolRow>
                <Combo $w={112}><ComboSelect aria-label="Font"><option>Calibri</option></ComboSelect><Down /></Combo>
                <Combo $w={44}><ComboSelect aria-label="Font size"><option>11</option></ComboSelect><Down /></Combo>
                <Tool $w={25} aria-label="Increase font size"><GrowFont /></Tool>
                <Tool $w={20} aria-label="Decrease font size"><GrowFont down /></Tool>
              </ToolRow>
              <ToolRow>
                <Tool $w={23} $on><Glyph $look="bold">B</Glyph></Tool>
                <Tool $w={22}><Glyph $look="italic">I</Glyph></Tool>
                <Tool $w={23}><Glyph $look="underline">U</Glyph></Tool>
                <Tool $w={11} aria-label="Underline styles"><Down /></Tool>
                <Rule $w={11} $h={20} />
                <Tool $w={22} aria-label="Borders"><BordersIcon /></Tool>
                <Tool $w={11} aria-label="Border styles"><Down /></Tool>
                <Rule $w={11} $h={20} />
                <Tool $w={22} aria-label="Fill color"><BucketIcon /></Tool>
                <Tool $w={10} aria-label="Fill colors"><Down /></Tool>
                <Tool $w={24} aria-label="Font color"><FontColorIcon /></Tool>
                <Tool $w={8} aria-label="Font colors"><Down /></Tool>
              </ToolRow>
            </Rows>
          </GroupBody>
          <GroupFooter name="Font" launcher />
        </Group>

        <Group $w={259}>
          <GroupBody $pad={5}>
            <Rows $w={125}>
              <ToolRow>
                <Tool $w={24} aria-label="Top align"><Lines kind="full" /></Tool>
                <Tool $w={23} aria-label="Middle align"><Lines kind="full" shift={4} /></Tool>
                <Tool $w={22} $on aria-label="Bottom align"><Lines kind="full" shift={7} /></Tool>
                <Rule $w={9} $h={22} />
                <Tool $w={22} aria-label="Orientation"><OrientIcon /></Tool>
                <Tool $w={8} aria-label="Orientations"><Down /></Tool>
              </ToolRow>
              <ToolRow>
                <Tool $w={24} aria-label="Align left"><Lines kind="left" shift={1} /></Tool>
                <Tool $w={23} aria-label="Center"><Lines kind="center" shift={1} /></Tool>
                <Tool $w={22} aria-label="Align right"><Lines kind="right" shift={1} /></Tool>
                <Rule $w={9} $h={22} />
                <Tool $w={23} aria-label="Decrease indent"><IndentIcon /></Tool>
                <Tool $w={22} aria-label="Increase indent"><IndentIcon inward /></Tool>
              </ToolRow>
            </Rows>
            <Rows>
              <Rule $w={10} $h={51} />
            </Rows>
            <Rows>
              <Small icon={<WrapIcon />} text="Wrap Text" />
              <Small icon={<MergeIcon />} text="Merge & Center" menu />
            </Rows>
          </GroupBody>
          <GroupFooter name="Alignment" launcher />
        </Group>

        <Group $w={143}>
          <GroupBody $pad={5}>
            <Rows>
              <ToolRow>
                <Combo $w={134}><ComboSelect aria-label="Number format"><option>Custom</option></ComboSelect><Down /></Combo>
              </ToolRow>
              <ToolRow>
                <Tool $w={24} aria-label="Accounting format"><CurrencyIcon /></Tool>
                <Tool $w={8} aria-label="Currencies"><Down /></Tool>
                <Tool $w={26}>%</Tool>
                <Tool $w={22}><Glyph $look="comma">,</Glyph></Tool>
                <Rule $w={9} $h={20} />
                <Tool $w={23} aria-label="Increase decimal"><DecimalIcon /></Tool>
                <Tool $w={22} aria-label="Decrease decimal"><DecimalIcon dec /></Tool>
              </ToolRow>
            </Rows>
          </GroupBody>
          <GroupFooter name="Number" launcher />
        </Group>

        <Group $w={175}>
          <GroupBody $pad={4}>
            <Big w={70} icon={<ConditionalIcon />} top="Conditional" bottom="Formatting" />
            <Big w={54} icon={<FormatTableIcon />} top="Format" bottom="as Table" />
            <Big w={44} icon={<CellStylesIcon />} top="Cell" bottom="Styles" />
          </GroupBody>
          <GroupFooter name="Styles" />
        </Group>

        <Group $w={136}>
          <GroupBody $pad={4}>
            <Big w={42} icon={<InsertIcon />} top="Insert" />
            <Big w={42} icon={<DeleteIcon />} top="Delete" />
            <Big w={42} icon={<FormatIcon />} top="Format" />
          </GroupBody>
          <GroupFooter name="Cells" />
        </Group>

        <Group $w={176}>
          <GroupBody $pad={7}>
            <Stack $w={79}>
              <Small icon={<SumIcon />} text="AutoSum" menu />
              <Small icon={<FillIcon />} text="Fill" menu />
              <Small icon={<EraserIcon />} text="Clear" menu />
            </Stack>
            <Big w={42} icon={<SortIcon />} top="Sort &amp;" bottom="Filter" />
            <Big w={42} icon={<FindIcon />} top="Find &amp;" bottom="Select" />
          </GroupBody>
          <GroupFooter name="Editing" />
        </Group>
      </Ribbon>

      <FormulaBar>
        <NameBox>
          <NameInput aria-label="Name box" defaultValue="B4" />
          <NameArrow aria-label="Names"><Down color="#333" s={7} /></NameArrow>
        </NameBox>
        <FunctionZone><Knob /><Fx>f<sub>x</sub></Fx></FunctionZone>
        <FormulaInput aria-label="Formula" defaultValue="Exam" />
        <ExpandButton aria-label="Expand formula bar"><Chevron /></ExpandButton>
      </FormulaBar>

      <SheetArea>
        <GridClip><Sheet /></GridClip>
        <VScroll>
          <VSplit />
          <ScrollArrow $w={15} $h={17} aria-label="Scroll up"><Arrow dir="up" /></ScrollArrow>
          <VThumb><Grip /></VThumb>
          <Spacer />
          <ScrollArrow $w={15} $h={17} aria-label="Scroll down"><Arrow dir="down" /></ScrollArrow>
        </VScroll>
      </SheetArea>

      <SheetBar>
        <SheetNav>
          <ScrollArrow $w={17} $h={15} aria-label="First sheet"><Arrow dir="left" bar /></ScrollArrow>
          <ScrollArrow $w={14} $h={15} aria-label="Previous sheet"><Arrow dir="left" /></ScrollArrow>
          <ScrollArrow $w={14} $h={15} aria-label="Next sheet"><Arrow dir="right" /></ScrollArrow>
          <ScrollArrow $w={16} $h={15} aria-label="Last sheet"><Arrow dir="right" bar /></ScrollArrow>
        </SheetNav>
        <SheetTabs>
          <TabShapes width="230" height="17" viewBox="0 0 230 17">
            <g fill="#e6eaef" stroke="#a0a7b0">
              <path d="M180 15.500l12-15h31l-12 15z" /><path d="M120 15.500l12-15h59l-12 15z" /><path d="M58 15.500l12-15h60l-12 15z" />
            </g>
            <path d="M.5 0v15.500H58l12-15.500z" fill="#fff" /><path d="M.5 0v15.500H58l12-15" fill="none" stroke="#a0a7b0" />
          </TabShapes>
          <SheetTab $w={62} $active>Sheet1</SheetTab>
          <SheetTab $w={60}>Sheet2</SheetTab>
          <SheetTab $w={60}>Sheet3</SheetTab>
          <SheetTab $w={36} aria-label="Insert worksheet"><NewSheetIcon /></SheetTab>
        </SheetTabs>
        <HScroll>
          <HSplit />
          <ScrollArrow $w={17} $h={15} aria-label="Scroll left"><Arrow dir="left" /></ScrollArrow>
          <HThumb><Grip vertical /></HThumb>
          <Rule $w={25} $h={15} $color="transparent" />
          <ScrollArrow $w={17} $h={15} aria-label="Scroll right"><Arrow dir="right" /></ScrollArrow>
          <HSplit />
        </HScroll>
      </SheetBar>

      <StatusBar>
        <StatusText $w={36}>Ready</StatusText>
        <Rule $w={9} $h={18} $color="#8d939b" />
        <Spacer />
        <Rule $w={9} $h={18} $color="#8d939b" />
        <ViewButton $w={19} $on aria-label="Normal view"><NormalView /></ViewButton>
        <ViewButton $w={18} aria-label="Page layout view"><PageView /></ViewButton>
        <ViewButton $w={20} aria-label="Page break preview"><BreakView /></ViewButton>
        <Rule $w={9} $h={18} $color="transparent" />
        <StatusText $w={35}>100%</StatusText>
        <button aria-label="Zoom out"><ZoomCircle /></button>
        <Zoom type="range" aria-label="Zoom" min={0} max={100} defaultValue={50} />
        <button aria-label="Zoom in"><ZoomCircle plus /></button>
        <Rule $w={2} $h={18} $color="transparent" />
      </StatusBar>

      <FormatCells />

      <MarkBox $x={59} $y={21} $w={60} $h={29} />
      <MarkNumber $x={125} $y={20}>1</MarkNumber>
      <MarkBox $x={1024} $y={49} $w={53} $h={83} />
      <MarkNumber $x={998} $y={63}>2</MarkNumber>
      <MarkBox $x={593} $y={225} $w={74} $h={42} />
      <MarkNumber $x={573} $y={230}>3</MarkNumber>
      <MarkBox $x={320} $y={283} $w={65} $h={21} />
      <MarkNumber $x={297} $y={276}>4</MarkNumber>
    </Window>
  );
}
